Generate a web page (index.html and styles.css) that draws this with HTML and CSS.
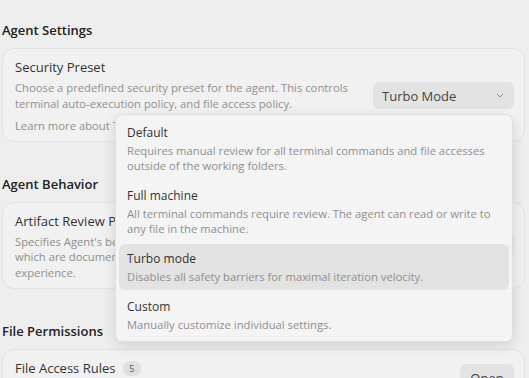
FILE: index.html
```html
<!DOCTYPE html>
<html lang="en">
<head>
    <meta charset="UTF-8">
    <meta name="viewport" content="width=device-width, initial-scale=1.0">
    <title>Agent Settings</title>
    <link rel="stylesheet" href="styles.css">
</head>
<body>
    <div class="settings">
        <section class="group">
            <h2 class="group-title">Agent Settings</h2>
            <div class="card card-top">
                <div class="card-row">
                    <div class="card-text">
                        <div class="card-title">Security Preset</div>
                        <p class="card-desc">Choose a predefined security preset for the agent. This controls terminal auto-execution policy, and file access policy.</p>
                        <p class="card-desc learn">Learn more about Turbo Mode</p>
                    </div>
                    <div class="select-wrap">
                        <button class="select">
                            Turbo Mode
                            <svg class="chevron" width="8" height="5" viewBox="0 0 8 5"><path d="M1 1l3 3 3-3" fill="none" stroke="#8c8c8c" stroke-width="1"/></svg>
                        </button>
                        <div class="menu">
                            <div class="menu-item">
                                <div class="item-title">Default</div>
                                <div class="item-desc">Requires manual review for all terminal commands and file accesses outside of the working folders.</div>
                            </div>
                            <div class="menu-item">
                                <div class="item-title">Full machine</div>
                                <div class="item-desc">All terminal commands require review. The agent can read or write to any file in the machine.</div>
                            </div>
                            <div class="menu-item active">
                                <div class="item-title">Turbo mode</div>
                                <div class="item-desc">Disables all safety barriers for maximal iteration velocity.</div>
                            </div>
                            <div class="menu-item">
                                <div class="item-title">Custom</div>
                                <div class="item-desc">Manually customize individual settings.</div>
                            </div>
                        </div>
                    </div>
                </div>
            </div>
        </section>

        <section class="group">
            <h2 class="group-title">Agent Behavior</h2>
            <div class="card">
                <div class="card-row">
                    <div class="card-text">
                        <div class="card-title">Artifact Review Policy</div>
                        <p class="card-desc">Specifies Agent's behavior when asking for review on artifacts,<br>which are documents it creates to give you a better<br>experience.</p>
                    </div>
                    <button class="select">Always ask</button>
                </div>
            </div>
        </section>

        <section class="group">
            <h2 class="group-title">File Permissions</h2>
            <div class="card">
                <div class="card-row">
                    <div class="card-text">
                        <div class="card-title">File Access Rules <span class="badge">5</span></div>
                        <p class="card-desc">Configure which files and folders the agent can read or write.</p>
                    </div>
                    <button class="btn">Open</button>
                </div>
            </div>
        </section>
    </div>
</body>
</html>
```

FILE: styles.css
```css
body {
    margin: 0;
    background-color: #eeeeee;
    font-family: "Open Sans", "Noto Sans", sans-serif;
    color: #333333;
}

.settings {
    padding: 20px 4px 0 2px;
}

.group-title {
    margin: 32px 0 8px;
    font-size: 13px;
    font-weight: 600;
    line-height: 20px;
    color: #222222;
}

.group:first-child .group-title {
    margin-top: 0;
}

.card {
    background-color: #f1f1f1;
    border: 1px solid #e2e2e2;
    border-radius: 12px;
    padding: 9px 10px 8px 12px;
}

.card-top {
    padding-bottom: 7px;
    position: relative;
    z-index: 2;
}

.card-row {
    display: flex;
    align-items: center;
    gap: 16px;
}

.card-text {
    flex: 1;
}

.card-title {
    font-size: 13px;
    line-height: 18px;
    color: #333333;
}

.card-desc {
    margin: 4px 0 0;
    font-size: 11.25px;
    line-height: 15.5px;
    color: #8f8f8f;
}

.card-desc.learn {
    margin-top: 7px;
}

.badge {
    display: inline-block;
    min-width: 18px;
    height: 15px;
    margin-left: 4px;
    border-radius: 8px;
    background-color: #e0e0e0;
    font-size: 9px;
    line-height: 15px;
    text-align: center;
    color: #555555;
    vertical-align: 1px;
}

.select-wrap {
    position: relative;
}

.select {
    display: flex;
    align-items: center;
    justify-content: space-between;
    width: 141px;
    height: 27px;
    padding: 0 10px 0 9px;
    border: none;
    border-radius: 6px;
    background-color: #e3e3e3;
    font-family: inherit;
    font-size: 13px;
    color: #444444;
}

.btn {
    width: 54px;
    height: 28px;
    border: none;
    border-radius: 6px;
    background-color: #e3e3e3;
    font-family: inherit;
    font-size: 13px;
    color: #444444;
}

.menu {
    position: absolute;
    top: calc(100% + 5px);
    right: 1px;
    width: 390px;
    padding: 3px;
    border: 1px solid #e0e0e0;
    border-radius: 7px;
    background-color: #f4f4f4;
    box-shadow: 0 4px 14px rgba(0, 0, 0, 0.12);
    display: flex;
    flex-direction: column;
    gap: 2px;
}

.menu-item {
    padding: 6px 8px;
    border-radius: 6px;
}

.menu-item.active {
    background-color: #e3e3e3;
}

.item-title {
    font-size: 12px;
    line-height: 18px;
    color: #333333;
}

.item-desc {
    margin-top: 1px;
    font-size: 11.25px;
    line-height: 15px;
    color: #8f8f8f;
}
```
